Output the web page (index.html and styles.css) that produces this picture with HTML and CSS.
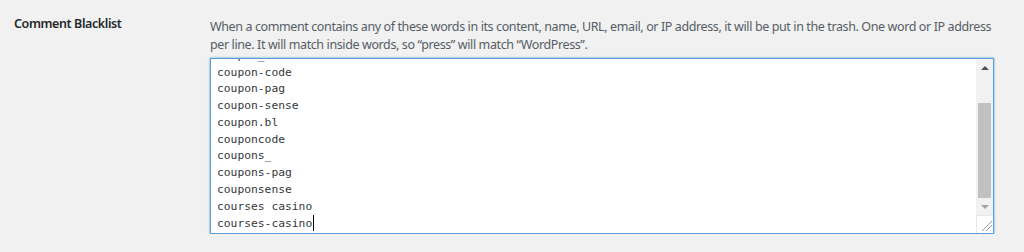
FILE: index.html
```html
<!DOCTYPE html>
<html lang="en">
<head>
<meta charset="UTF-8">
<meta name="viewport" content="width=device-width, initial-scale=1.0">
<title>Discussion Settings</title>
<link rel="stylesheet" href="styles.css">
</head>
<body>

  <div class="settings-row">
      <div class="settings-label">Comment Blacklist</div>
      <div class="settings-field">
          <p class="description">When a comment contains any of these words in its content, name, URL, email, or IP address, it will be put in the trash. One word or IP address per line. It will match inside words, so &#8220;press&#8221; will match &#8220;WordPress&#8221;.</p>

          <div class="blacklist-box">
              <div class="blacklist-lines">
                  <div>coupon_</div>
                  <div>coupon-code</div>
                  <div>coupon-pag</div>
                  <div>coupon-sense</div>
                  <div>coupon.bl</div>
                  <div>couponcode</div>
                  <div>coupons_</div>
                  <div>coupons-pag</div>
                  <div>couponsense</div>
                  <div>courses casino</div>
                  <div>courses-casino<span class="caret"></span></div>
              </div>
              <div class="scrollbar">
                  <div class="scroll-btn up"></div>
                  <div class="scroll-track">
                      <div class="scroll-thumb"></div>
                  </div>
                  <div class="scroll-btn down"></div>
                  <div class="resizer">
                      <svg width="17" height="17" viewBox="0 0 17 17">
                          <line x1="5" y1="15" x2="15" y2="5" stroke="#9a9a9a" stroke-width="1"/>
                          <line x1="9" y1="15" x2="15" y2="9" stroke="#9a9a9a" stroke-width="1"/>
                      </svg>
                  </div>
              </div>
          </div>
      </div>
  </div>

</body>
</html>
```

FILE: styles.css
```css
body {
  margin: 0;
  background: #f1f1f1;
  font-family: "Noto Sans", "Open Sans", sans-serif;
}

.settings-row {
  display: flex;
  padding: 14px 0 0 14px;
}

.settings-label {
  width: 196px;
  flex-shrink: 0;
  padding-top: 1px;
  font-size: 12.5px;
  font-weight: 600;
  letter-spacing: -0.4px;
  line-height: 18px;
  color: #23282d;
}

.settings-field {
  width: 784px;
}

.description {
  margin: 4px 0 4px;
  font-size: 12.5px;
  letter-spacing: -0.39px;
  line-height: 18px;
  color: #555d66;
}

.blacklist-box {
  display: flex;
  height: 174px;
  background: #fff;
  border: 1px solid #5b9dd9;
  box-shadow: 0 0 2px rgba(30, 140, 190, 0.8);
}

.blacklist-lines {
  flex: 1;
  display: flex;
  flex-direction: column;
  justify-content: flex-end;
  overflow: hidden;
  padding: 0 6px 0;
  font-family: "DejaVu Sans Mono", monospace;
  font-size: 11.3px;
  line-height: 16.75px;
  color: #32373c;
}

.blacklist-lines > div {
  flex-shrink: 0;
}

.caret {
  display: inline-block;
  width: 1px;
  height: 16px;
  margin-left: 1px;
  background: #000;
  vertical-align: -4px;
}

.scrollbar {
  width: 17px;
  display: flex;
  flex-direction: column;
  background: #f1f1f1;
}

.scroll-btn {
  height: 17px;
  display: flex;
  align-items: center;
  justify-content: center;
}

.scroll-btn::before {
  content: "";
  border-left: 4px solid transparent;
  border-right: 4px solid transparent;
}

.scroll-btn.up::before {
  border-bottom: 4px solid #505050;
}

.scroll-btn.down::before {
  border-top: 4px solid #a3a3a3;
}

.scroll-track {
  flex: 1;
  display: flex;
  flex-direction: column;
  justify-content: flex-end;
  padding: 0 2px;
}

.scroll-thumb {
  height: 95px;
  background: #c1c1c1;
}

.resizer {
  height: 17px;
  background: #fff;
  border-top: 1px solid #e6e6e6;
  border-left: 1px solid #e6e6e6;
}

.resizer svg {
  display: block;
}
```
